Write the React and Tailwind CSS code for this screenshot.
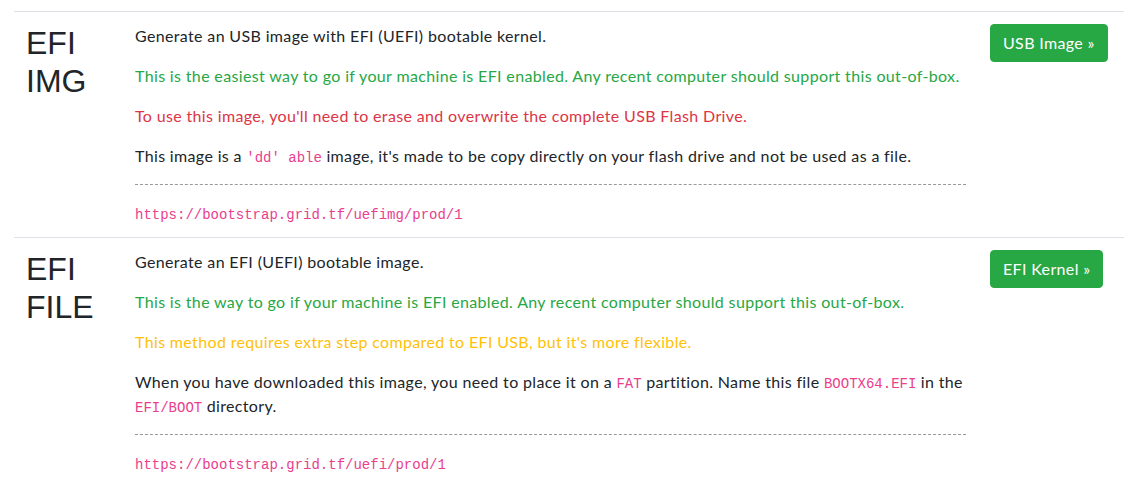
const body = "font-['Lato',sans-serif] tracking-[0.35px]";

function Code({ children }) {
  return (
    <code className="font-['Liberation_Mono',monospace] text-[14px] leading-none tracking-normal text-[#e83e8c]">
      {children}
    </code>
  );
}

function Button({ children }) {
  return (
    <a className={`inline-block rounded-[4px] border border-[#28a745] bg-[#28a745] px-3 py-1.5 text-[16px] leading-6 text-white ${body}`}>
      {children}
    </a>
  );
}

function Row({ title, button, url, children }) {
  return (
    <tr className="border-t border-[#dee2e6] align-top">
      <td className="w-[109px] p-3">
        <h2 className="font-['Liberation_Sans',Arial,sans-serif] text-[32px] leading-[1.2] font-medium tracking-normal text-[#212529]">
          {title[0]}
          <br />
          {title[1]}
        </h2>
      </td>
      <td className="p-3">
        {children}
        <hr className="my-4 border-0 border-t border-dashed border-[#999]" />
        <div className="leading-6">
          <Code>{url}</Code>
        </div>
      </td>
      <td className="w-[146px] p-3">
        <Button>{button}</Button>
      </td>
    </tr>
  );
}

export default function App() {
  return (
    <div className={`bg-white pt-[11px] pl-[14px] text-[16px] leading-6 text-[#212529] ${body}`}>
      <table className="w-[1110px] border-collapse">
        <tbody>
          <Row title={['EFI', 'IMG']} button="USB Image »" url="https://bootstrap.grid.tf/uefimg/prod/1">
            <p className="mb-4">Generate an USB image with EFI (UEFI) bootable kernel.</p>
            <p className="mb-4 text-[#28a745]">
              This is the easiest way to go if your machine is EFI enabled. Any recent computer should support this out-of-box.
            </p>
            <p className="mb-4 text-[#dc3545]">To use this image, you'll need to erase and overwrite the complete USB Flash Drive.</p>
            <p className="mb-4">
              This image is a <Code>'dd' able</Code> image, it's made to be copy directly on your flash drive and not be used as a file.
            </p>
          </Row>
          <Row title={['EFI', 'FILE']} button="EFI Kernel »" url="https://bootstrap.grid.tf/uefi/prod/1">
            <p className="mb-4">Generate an EFI (UEFI) bootable image.</p>
            <p className="mb-4 text-[#28a745]">
              This is the way to go if your machine is EFI enabled. Any recent computer should support this out-of-box.
            </p>
            <p className="mb-4 text-[#ffc107]">This method requires extra step compared to EFI USB, but it's more flexible.</p>
            <p className="mb-4">
              When you have downloaded this image, you need to place it on a <Code>FAT</Code> partition. Name this file{' '}
              <Code>BOOTX64.EFI</Code> in the <Code>EFI/BOOT</Code> directory.
            </p>
          </Row>
        </tbody>
      </table>
    </div>
  );
}
